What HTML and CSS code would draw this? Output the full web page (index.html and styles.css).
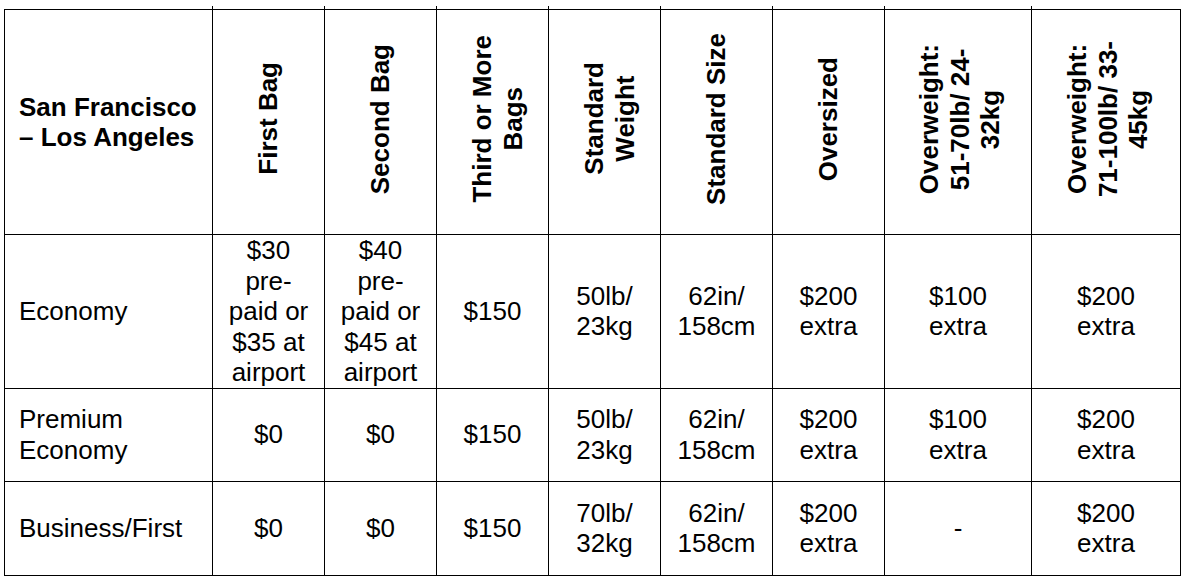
FILE: index.html
```html
<!DOCTYPE html>
<html lang="en">
<head>
<meta charset="utf-8">
<title>Baggage fees</title>
<link rel="stylesheet" href="styles.css">
</head>
<body>
<table class="fees">
  <colgroup>
    <col class="c-route">
    <col class="c-std"><col class="c-std"><col class="c-std">
    <col class="c-std"><col class="c-std"><col class="c-std">
    <col class="c-ow1">
    <col class="c-ow2">
  </colgroup>
  <thead>
    <tr class="r-head">
      <th class="route">San Francisco<br>– Los Angeles</th>
      <th class="vh"><div class="rot">First Bag</div></th>
      <th class="vh"><div class="rot">Second Bag</div></th>
      <th class="vh two"><div class="rot">Third or More<br>Bags</div></th>
      <th class="vh two"><div class="rot">Standard<br>Weight</div></th>
      <th class="vh"><div class="rot">Standard Size</div></th>
      <th class="vh"><div class="rot">Oversized</div></th>
      <th class="vh three"><div class="rot">Overweight:<br>51-70lb/ 24-<br>32kg</div></th>
      <th class="vh three"><div class="rot">Overweight:<br>71-100lb/ 33-<br>45kg</div></th>
    </tr>
  </thead>
  <tbody>
    <tr class="r-eco">
      <td class="cls">Economy</td>
      <td>$30<br>pre-<br>paid or<br>$35 at<br>airport</td>
      <td>$40<br>pre-<br>paid or<br>$45 at<br>airport</td>
      <td>$150</td>
      <td>50lb/<br>23kg</td>
      <td>62in/<br>158cm</td>
      <td>$200<br>extra</td>
      <td>$100<br>extra</td>
      <td>$200<br>extra</td>
    </tr>
    <tr class="r-prem">
      <td class="cls">Premium<br>Economy</td>
      <td>$0</td>
      <td>$0</td>
      <td>$150</td>
      <td>50lb/<br>23kg</td>
      <td>62in/<br>158cm</td>
      <td>$200<br>extra</td>
      <td>$100<br>extra</td>
      <td>$200<br>extra</td>
    </tr>
    <tr class="r-bus">
      <td class="cls">Business/First</td>
      <td>$0</td>
      <td>$0</td>
      <td>$150</td>
      <td>70lb/<br>32kg</td>
      <td>62in/<br>158cm</td>
      <td>$200<br>extra</td>
      <td>-</td>
      <td>$200<br>extra</td>
    </tr>
  </tbody>
</table>
</body>
</html>
```

FILE: styles.css
```css
html, body {
  margin: 0;
  padding: 0;
  background: #ffffff;
}

body {
  padding: 9px 0 0 4px;
  font-family: "Liberation Sans", Arial, sans-serif;
  font-size: 26px;
  line-height: 30.5px;
  color: #000000;
}

.fees {
  border-collapse: collapse;
  table-layout: fixed;
  width: 1176px;
}

.c-route { width: 208px; }
.c-std { width: 112px; }
.c-ow1 { width: 147px; }
.c-ow2 { width: 149px; }

.fees th,
.fees td {
  border: 1px solid #000000;
  padding: 0 8px;
  text-align: center;
  vertical-align: middle;
}

.fees th {
  font-weight: bold;
}

.fees thead th + th {
  position: relative;
}

.fees thead th + th::before {
  content: "";
  position: absolute;
  top: -4px;
  left: -1px;
  width: 1px;
  height: 4px;
  background: #000000;
}

.fees th.route,
.fees td.cls {
  text-align: left;
  padding-left: 14px;
}

.fees th.two {
  padding-left: 18px;
}

.fees th.three {
  padding-left: 12px;
}

.r-head { height: 225px; }
.r-eco { height: 153px; }
.r-prem { height: 93px; }
.r-bus { height: 94px; }

.rot {
  display: inline-block;
  writing-mode: vertical-rl;
  transform: rotate(180deg);
  text-align: center;
  white-space: nowrap;
}
```
